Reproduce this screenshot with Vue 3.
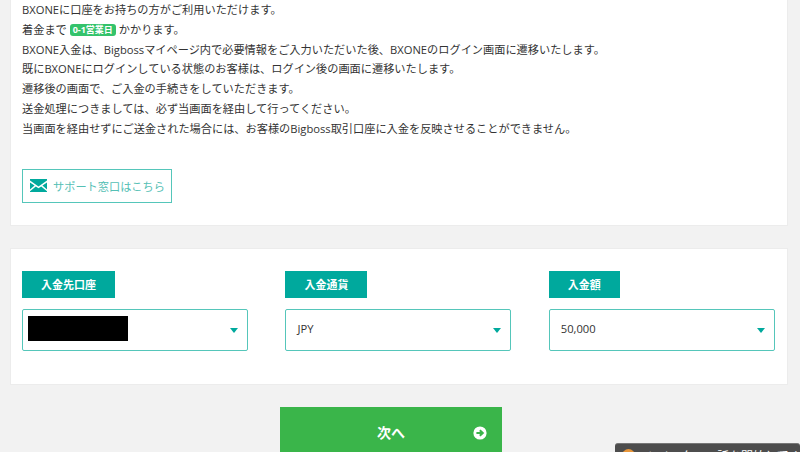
<script setup>
const lines = [
  'BXONE入金は、Bigbossマイページ内で必要情報をご入力いただいた後、BXONEのログイン画面に遷移いたします。',
  '既にBXONEにログインしている状態のお客様は、ログイン後の画面に遷移いたします。',
  '遷移後の画面で、ご入金の手続きをしていただきます。',
  '送金処理につきましては、必ず当画面を経由して行ってください。',
  '当画面を経由せずにご送金された場合には、お客様のBigboss取引口座に入金を反映させることができません。'
]
const fields = [
  { label: '入金先口座', value: '', width: 93, masked: true },
  { label: '入金通貨', value: 'JPY', width: 82 },
  { label: '入金額', value: '50,000', width: 71 }
]
</script>

<template>
  <div class="page">
    <section class="card info">
      <div class="copy">
        <p>BXONEに口座をお持ちの方がご利用いただけます。</p>
        <p>着金まで <span class="badge">0-1営業日</span> かかります。</p>
        <p v-for="line in lines" :key="line">{{ line }}</p>
      </div>
      <a class="support">
        <svg width="17" height="13" viewBox="0 0 17 13" class="mail">
          <path d="M0 0H17V1.6L8.5 7.6 0 1.6Z" fill="#00a99d" />
          <path d="M0 3.4L4.6 6.6 0 10.6ZM17 3.4L12.4 6.6 17 10.6ZM0 13V12.2L5.8 7.4 8.5 9.3 11.2 7.4 17 12.2V13Z" fill="#00a99d" />
        </svg>
        <span>サポート窓口はこちら</span>
      </a>
    </section>

    <section class="card form">
      <div v-for="f in fields" :key="f.label" class="field">
        <div class="label" :style="{ width: f.width + 'px' }">{{ f.label }}</div>
        <div class="select">
          <span v-if="f.masked" class="mask"></span>
          <span v-else>{{ f.value }}</span>
          <i class="caret"></i>
        </div>
      </div>
    </section>

    <div class="actions">
      <button class="next">
        <span>次へ</span>
        <svg class="arrow" width="14" height="14" viewBox="0 0 14 14">
          <circle cx="7" cy="7" r="6.6" fill="#fff" />
          <path d="M3.4 7H9M6.8 4.2 9.8 7 6.8 9.8" fill="none" stroke="#3ab54a" stroke-width="2" />
        </svg>
      </button>
    </div>

    <div class="toast">
      <i class="dot"></i>
      <span>ツイッターの話を開始してください</span>
    </div>
  </div>
</template>

<style>
html, body { margin: 0; background: #f2f2f2; overflow: hidden; }
</style>

<style scoped>
.page {
  position: relative;
  height: 452px;
  overflow: hidden;
  padding: 0 13px 0 11px;
  box-sizing: border-box;
  background: #f2f2f2;
  color: #333;
  font-family: "Open Sans", "Noto Sans CJK JP", sans-serif;
  font-size: 11.2px;
}
.card {
  background: #fff;
  box-shadow: 0 0 0 1px #ececec;
}
.info {
  height: 225px;
  box-sizing: border-box;
  padding: 0 11px;
  display: flex;
  flex-direction: column;
}
.copy {
  margin-top: 0;
}
.copy p {
  margin: 0;
  line-height: 19.8px;
  white-space: nowrap;
}
.badge {
  display: inline-block;
  padding: 0 3px;
  border-radius: 3px;
  background: #34c36b;
  color: #fff;
  font-size: 9px;
  font-weight: 700;
  line-height: 12px;
  vertical-align: 1px;
}
.support {
  margin-top: 30px;
  width: 150px;
  height: 34px;
  box-sizing: border-box;
  border: 1px solid #55c6ba;
  display: flex;
  align-items: center;
  gap: 6px;
  padding-left: 7px;
  color: #55c0b5;
  white-space: nowrap;
}
.mail { flex: none; }
.form {
  margin-top: 24px;
  height: 135px;
  box-sizing: border-box;
  padding: 22px 12px 0 11px;
  display: grid;
  grid-template-columns: repeat(3, 226px);
  column-gap: 37.4px;
}
.label {
  height: 27px;
  background: #00a99d;
  color: #fff;
  font-weight: 700;
  font-size: 11px;
  line-height: 27px;
  text-align: center;
}
.select {
  margin-top: 11px;
  height: 42px;
  box-sizing: border-box;
  border: 1px solid #55c6ba;
  border-radius: 2px;
  padding: 0 9px 0 11px;
  display: flex;
  align-items: center;
  justify-content: space-between;
  background: #fff;
}
.select > span:not(.mask) {
  margin-bottom: 4px;
}
.mask {
  width: 100px;
  height: 25px;
  margin-left: -6px;
  margin-bottom: 4px;
  background: #000;
}
.caret {
  width: 0;
  height: 0;
  margin-left: auto;
  border-left: 4.5px solid transparent;
  border-right: 4.5px solid transparent;
  border-top: 5px solid #00a99d;
}
.actions {
  margin-top: 23px;
  display: flex;
  padding-left: 269px;
}
.next {
  position: relative;
  width: 222px;
  height: 50px;
  border: 0;
  padding: 0;
  background: #3ab54a;
  color: #fff;
  font-family: inherit;
  font-size: 14px;
  font-weight: 700;
}
.arrow {
  position: absolute;
  right: 15px;
  top: 19px;
}
.toast {
  position: absolute;
  left: 615px;
  top: 443px;
  width: 185px;
  height: 40px;
  box-sizing: border-box;
  padding: 5px 0 0 7px;
  background: #4d4d4d;
  border-top: 1px solid #777;
  border-radius: 3px 3px 0 0;
  color: #fff;
  display: flex;
  gap: 10px;
  font-size: 12px;
  line-height: 16px;
  white-space: nowrap;
  overflow: hidden;
}
.dot {
  flex: none;
  width: 13px;
  height: 13px;
  border-radius: 50%;
  background: #e8963a;
}
</style>
